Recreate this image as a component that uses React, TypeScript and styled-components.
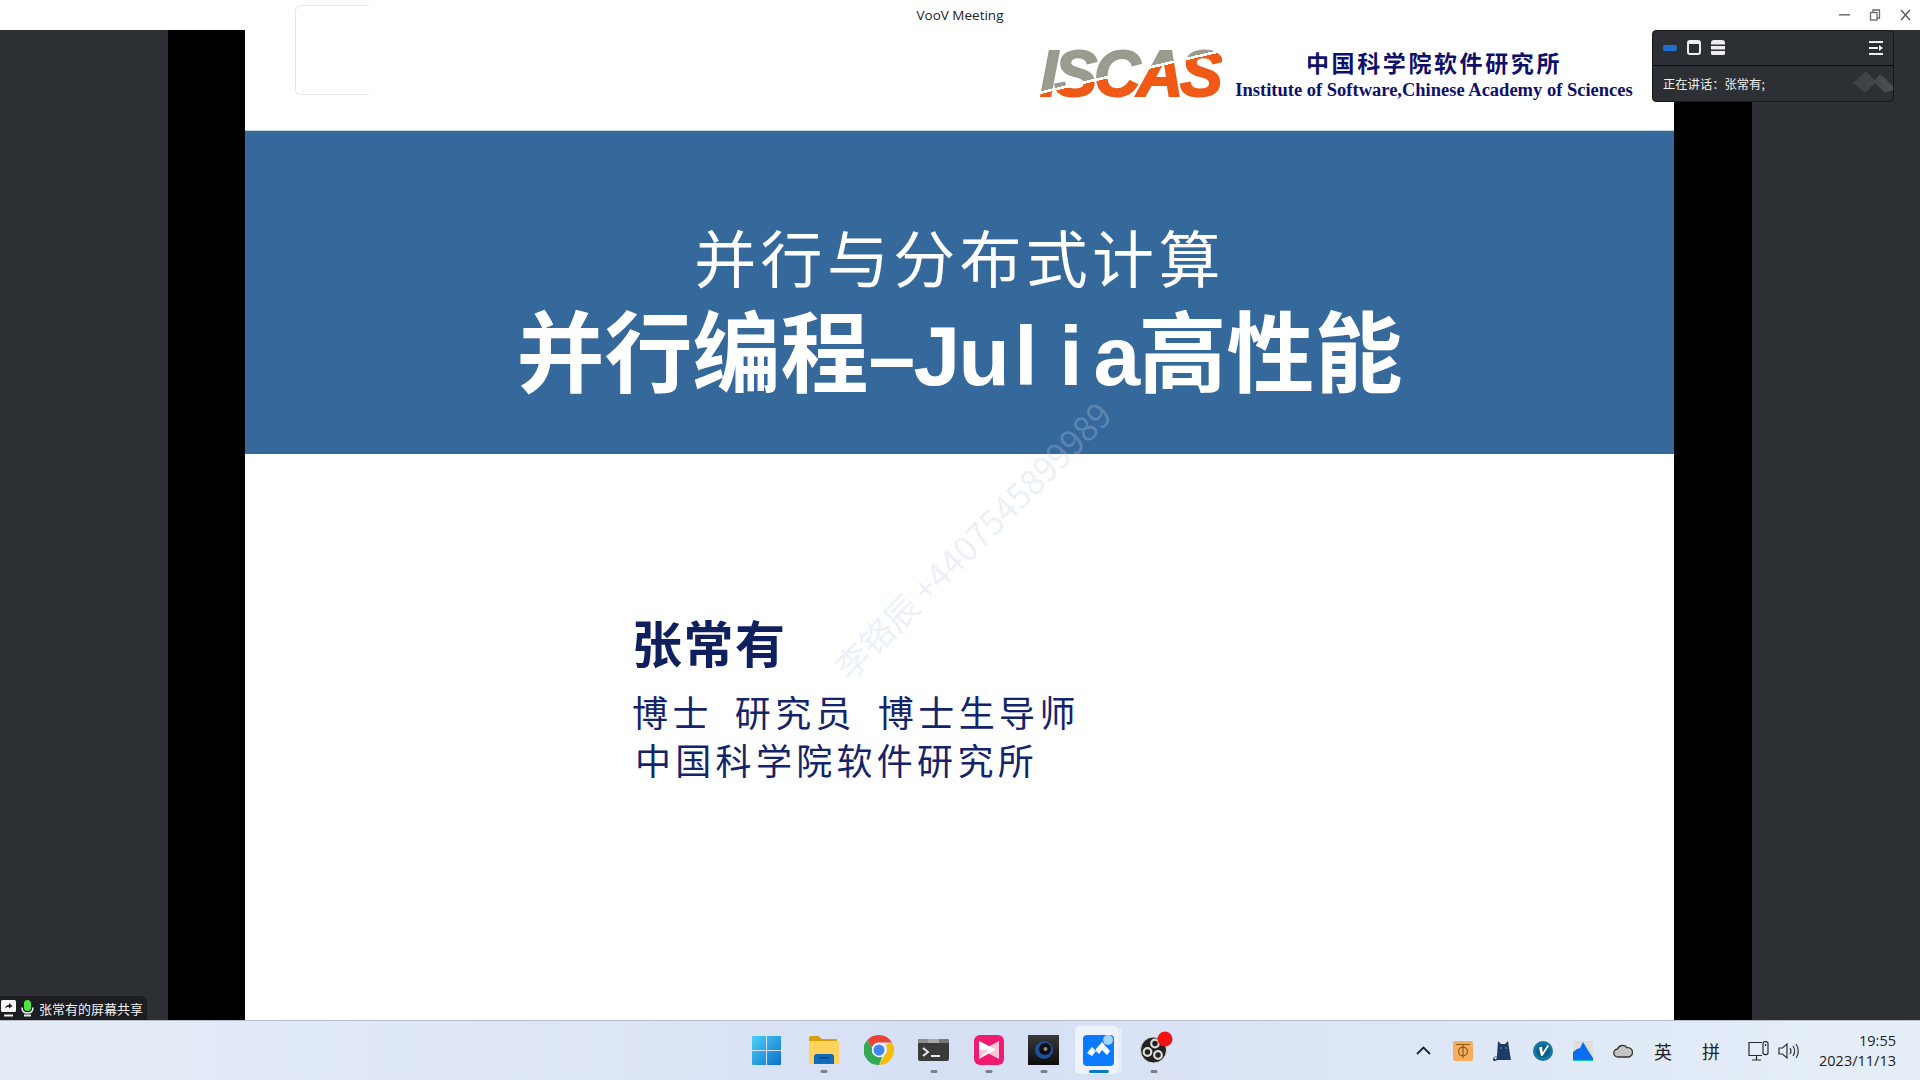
import React from "react";
import styled, { createGlobalStyle } from "styled-components";

const Global = createGlobalStyle`
  html, body { margin: 0; padding: 0; background: #fff; overflow: hidden; }
  #root { width: 1920px; height: 1080px; }
`;

const CJK = `"Noto Sans CJK SC", "Noto Sans", sans-serif`;
const SEGOE = `"Open Sans", "Noto Sans CJK SC", sans-serif`;
const SERIF = `"Liberation Serif", "Noto Sans CJK SC", serif`;

const Screen = styled.div`
  width: 1920px; height: 1080px; display: flex; flex-direction: column; position: relative; overflow: hidden;
  font-family: ${CJK}; background: #fff;
`;
const TitleBar = styled.div`
  height: 30px; flex: none; display: flex; align-items: center; justify-content: center; position: relative; z-index: 2;
`;
const TitleText = styled.span`
  font: 400 13.5px ${SEGOE}; color: #222;
`;
const WindowButtons = styled.div`
  position: absolute; right: 8px; top: 9px; display: flex; gap: 18px; align-items: center;
`;
const Stage = styled.div`
  flex: 1; display: flex; min-height: 0; position: relative;
`;
const Side = styled.div`
  width: 168px; flex: none; background: #2c2f33;
`;
const Pillar = styled.div<{ $w: number }>`
  width: ${(p) => p.$w}px; flex: none; background: #000;
`;
const Slide = styled.div`
  width: 1429px; flex: none; background: #fff; display: flex; flex-direction: column; margin-top: -30px; position: relative; z-index: 1;
`;
const SlideHeader = styled.div`
  height: 130px; flex: none; display: flex; align-items: flex-start; padding: 5px 41px 0 50px; box-sizing: border-box; justify-content: space-between;
`;
const Placeholder = styled.div`
  width: 73px; height: 88px; border: 1px solid #e6e6e6; border-right: none; border-radius: 6px 0 0 6px;
`;
const LogoBlock = styled.div`
  display: flex; align-items: flex-start; gap: 13px; margin-top: 44px;
`;
const LogoMark = styled.div`
  font: italic 700 64px/50px "Liberation Sans", sans-serif; letter-spacing: -3.2px; width: 182px; height: 50px; white-space: nowrap;
  background: linear-gradient(167deg, #9b9b8f 0 46%, #fff 46% 49%, #f15a16 49% 100%);
  -webkit-background-clip: text; background-clip: text; color: transparent;
  -webkit-text-stroke: 2px rgba(0, 0, 0, 0.01);
`;
const Institute = styled.div`
  display: flex; flex-direction: column; align-items: center; width: 398px; color: #10106a;
`;
const InstituteCn = styled.div`
  font: 700 23px/32px ${CJK}; letter-spacing: 2.6px; margin-top: -3px;
`;
const InstituteEn = styled.div`
  font: 700 18.5px/24px ${SERIF}; white-space: nowrap;
`;
const Band = styled.div`
  height: 324px; flex: none; background: #35689b; color: #fff; display: flex; flex-direction: column; align-items: center;
  border-top: 1px solid #c4d4e2; box-sizing: border-box;
`;
const TitleOne = styled.div`
  font: 400 62px/80px ${CJK}; letter-spacing: 4.3px; margin-top: 85px; white-space: nowrap;
`;
const TitleTwo = styled.div`
  font: 700 88px/100px ${CJK}; margin-top: 1px; white-space: nowrap; display: flex; align-items: baseline;
`;
const Latin = styled.span`
  display: inline-flex; flex: none;
`;
const LatinCell = styled.span`
  flex: none; width: 45px; text-align: center; font: 700 84px/100px "Liberation Sans", sans-serif;
`;
const SlideBody = styled.div`
  flex: 1; display: flex; flex-direction: column; padding: 155px 0 0 387px; color: #14246a;
`;
const Name = styled.div`
  font: 700 50px/64px ${CJK}; letter-spacing: 1.5px; color: #10205f;
`;
const Role = styled.div`
  font: 400 36px/48px ${CJK}; letter-spacing: 4.4px; word-spacing: -1.5px; white-space: pre; margin-top: 14px;
`;
const Org = styled(Role)`
  margin-top: 0; padding-left: 3px; letter-spacing: 4.3px;
`;
const Watermark = styled.div`
  position: absolute; left: 595px; top: 650px; transform: rotate(-45deg); transform-origin: left center;
  font: 400 34px/44px ${CJK}; color: rgba(190, 205, 230, 0.3); white-space: nowrap; z-index: 3; pointer-events: none;
`;
const SharePanel = styled.div`
  position: absolute; right: 26px; top: 0; width: 242px; height: 72px; background: #2c2f33; border: 1px solid #17181a; border-radius: 4px;
  box-sizing: border-box; display: flex; flex-direction: column; z-index: 4; overflow: hidden;
`;
const PanelTools = styled.div`
  height: 35px; flex: none; border-bottom: 1px solid #0b0b0c; display: flex; align-items: center; padding: 0 10px 1px 10px; gap: 10px; box-sizing: border-box;
`;
const PanelRow = styled.div`
  flex: 1; display: flex; align-items: center; padding-left: 10px; position: relative;
  font: 400 12.3px ${CJK}; color: #f0f0f0; white-space: pre;
`;
const PanelMark = styled.svg`
  position: absolute; right: 0; top: 5px;
`;
const Spacer = styled.div` flex: 1; `;
const SpeakerTag = styled.div`
  position: absolute; left: 0; bottom: 0; height: 24px; width: 147px; background: #1b1d20; border-radius: 0 6px 0 0;
  display: flex; align-items: center; padding-left: 1px; gap: 5px; box-sizing: border-box; z-index: 4;
`;
const TagText = styled.span`
  font: 400 13px ${CJK}; color: #f2f2f2; white-space: nowrap;
`;
const Taskbar = styled.div`
  height: 60px; flex: none; box-sizing: border-box; border-top: 1px solid #b8bcc8; position: relative; display: flex; align-items: center; justify-content: center;
  background: linear-gradient(90deg, #e4edf7 0%, #dfe7f6 25%, #d6e0f5 50%, #dde7f6 75%, #e6eff8 100%);
`;
const Apps = styled.div`
  display: flex; align-items: center; margin-top: -1px;
`;
const AppSlot = styled.div<{ $active?: boolean; $first?: boolean }>`
  width: 55px; height: 48px; margin-right: ${(p) => (p.$first ? 2.5 : 0)}px; flex: none;
  display: flex; align-items: center; justify-content: center; position: relative;
  &::before {
    content: "";
    display: ${(p) => (p.$active ? "block" : "none")};
    position: absolute; left: 3.500px; top: 0; bottom: 0; width: 43px; border-radius: 5px;
    background: #eef2fb; box-shadow: 5px 0 0 -1px #e6ebf8;
  }
  & > svg { position: relative; }
`;
const Dot = styled.span<{ $active?: boolean }>`
  position: absolute; bottom: 1px; left: 50%; transform: translateX(-50%); height: 3.5px; border-radius: 2px;
  width: ${(p) => (p.$active ? 20 : 7)}px; background: ${(p) => (p.$active ? "#0b78d0" : "#7a7f88")};
`;
const Tray = styled.div`
  position: absolute; right: 0; top: 0; bottom: 0; display: flex; align-items: center; padding-right: 24px;
`;
const TrayItem = styled.div<{ $w: number }>`
  width: ${(p) => p.$w}px; flex: none; display: flex; align-items: center; justify-content: center;
`;
const Ime = styled.span`
  font: 400 18px ${CJK}; color: #222; line-height: 1;
`;
const Clock = styled.div`
  font: 400 14.5px/20px ${SEGOE}; color: #1c1c1c; text-align: right; margin-left: 20px; width: 77px; flex: none; white-space: nowrap;
`;

const WinLogo = () => (
  <svg width="29" height="29" viewBox="0 0 29 29">
    <defs>
      <linearGradient id="w" x1="0" y1="0" x2="1" y2="1"><stop offset="0" stopColor="#4ed2fb" /><stop offset="1" stopColor="#0a6fc8" /></linearGradient>
    </defs>
    <path fill="url(#w)" d="M1 0h13v14H0V1a1 1 0 0 1 1-1zM15 0h13a1 1 0 0 1 1 1v13H15zM0 15h14v14H1a1 1 0 0 1-1-1zM15 15h14v13a1 1 0 0 1-1 1H15z" />
  </svg>
);
const Folder = () => (
  <svg width="30" height="28" viewBox="0 0 30 28">
    <path fill="#d99e0c" d="M0 2a2 2 0 0 1 2-2h7l4 3h15v6H0z" />
    <path fill="#fdd35c" d="M0 5h28a2 2 0 0 1 2 2v21H0z" />
    <path fill="#0f6cbd" d="M5 28v-7a3 3 0 0 1 3-3h14a3 3 0 0 1 3 3v7z" />
    <rect x="10" y="21" width="10" height="1.5" fill="#0a3f78" />
  </svg>
);
const Chrome = () => (
  <svg width="30" height="30" viewBox="0 0 48 48">
    <path fill="#ea4335" d="M24 0a24 24 0 0 1 20.800 12H24a12 12 0 0 0-11.400 8.200L5.400 8A24 24 0 0 1 24 0z" />
    <path fill="#fbbc05" d="M44.800 12A24 24 0 0 1 24 48l10.400-18A12 12 0 0 0 35 16z" />
    <path fill="#34a853" d="M24 48A24 24 0 0 1 5.400 8l10.400 18A12 12 0 0 0 29 35z" />
    <circle cx="24" cy="24" r="11.500" fill="#fff" />
    <circle cx="24" cy="24" r="9" fill="#4285f4" />
  </svg>
);
const Terminal = () => (
  <svg width="31" height="22" viewBox="0 0 31 22">
    <rect width="31" height="22" rx="2" fill="#3a3a3a" />
    <path fill="#8e8e8e" d="M2 0h8v4H0V2a2 2 0 0 1 2-2z" />
    <rect x="10" width="11" height="4" fill="#a8a8a8" />
    <path fill="#777" d="M21 0h8a2 2 0 0 1 2 2v2H21z" />
    <path d="M5 9l5 4-5 4" fill="none" stroke="#e8e8e8" strokeWidth="2" />
    <rect x="13" y="16" width="9" height="2" fill="#e8e8e8" />
  </svg>
);
const PinkApp = () => (
  <svg width="30" height="30" viewBox="0 0 30 30">
    <rect width="30" height="30" rx="6" fill="#f01a70" />
    <path fill="#f9c5d8" d="M25 6L8 15l17 9z" />
    <path fill="#fff" d="M5 6l17 8.500L5 24z" />
    <path fill="#f9c5d8" d="M5 15h9l-9 9z" />
  </svg>
);
const Camera = () => (
  <svg width="31" height="30" viewBox="0 0 31 30">
    <defs>
      <linearGradient id="c" x1="0" y1="0" x2="0" y2="1"><stop offset="0" stopColor="#3a3a3a" /><stop offset="1" stopColor="#0c0c0c" /></linearGradient>
    </defs>
    <rect width="31" height="30" fill="url(#c)" />
    <circle cx="16" cy="15" r="9" fill="#1d4f9c" />
    <circle cx="17" cy="14" r="6" fill="#0d0d12" />
    <circle cx="17.500" cy="14" r="2" fill="#8a8a8a" />
  </svg>
);
const Voov = () => (
  <svg width="31" height="31" viewBox="0 0 31 31">
    <rect width="31" height="31" rx="4" fill="#0a7bff" />
    <path fill="#fff" d="M4 18l5-6 4 4-4 5zM13 14l6-7 8 9-3 4-5-5-3 4-3-3z" />
    <path fill="#cfe4ff" d="M9 12l4 4-2 2z" />
    <circle cx="25" cy="5" r="5" fill="#a9d4ff" />
  </svg>
);
const Obs = () => (
  <svg width="38" height="38" viewBox="0 0 38 38">
    <circle cx="18.500" cy="19" r="13" fill="#222" stroke="#d8d8d8" strokeWidth="1" />
    <g fill="none" stroke="#dcdcdc" strokeWidth="2.200">
      <circle cx="20" cy="12.500" r="3.800" />
      <circle cx="12.500" cy="21" r="3.800" />
      <circle cx="23" cy="24" r="3.800" />
    </g>
    <circle cx="30" cy="8" r="7.500" fill="#f01414" />
  </svg>
);
const Minimize = () => (
  <svg width="13" height="12" viewBox="0 0 13 12"><rect x="1" y="5" width="11" height="1.600" fill="#777" /></svg>
);
const Restore = () => (
  <svg width="12" height="12" viewBox="0 0 12 12" fill="none" stroke="#666" strokeWidth="1.300">
    <rect x="1.500" y="3.500" width="6.500" height="7.500" /><path d="M4 3.500V1h6.500v8H8" />
  </svg>
);
const Close = () => (
  <svg width="13" height="12" viewBox="0 0 13 12" stroke="#555" strokeWidth="1.300"><path d="M2 1l9 10M11 1L2 11" /></svg>
);
const ShareScreen = () => (
  <svg width="15" height="17" viewBox="0 0 15 17">
    <rect width="15" height="12" rx="1.500" fill="#f5f5f5" />
    <rect x="3" y="14.500" width="9" height="2" fill="#f5f5f5" />
    <path d="M4 8.500c.6-2.400 2-3.400 4-3.400V3l3.500 3L8 8.600V7c-1.700 0-3 .3-4 1.500z" fill="#222" />
  </svg>
);
const Mic = () => (
  <svg width="13" height="17" viewBox="0 0 13 17">
    <rect x="3" y="0" width="7" height="11" rx="3.500" fill="#4fe33f" />
    <path d="M1 7.500c0 3.500 2.400 5.500 5.500 5.500S12 11 12 7.500" fill="none" stroke="#eee" strokeWidth="1.600" />
    <rect x="3" y="14.500" width="7" height="2" fill="#eee" />
  </svg>
);
const ChevronUp = () => (
  <svg width="15" height="9" viewBox="0 0 15 9" fill="none" stroke="#222" strokeWidth="1.800"><path d="M1 8l6.500-6.500L14 8" /></svg>
);
const OrangeTray = () => (
  <svg width="20" height="20" viewBox="0 0 20 20">
    <rect width="20" height="20" rx="2" fill="#f7ad5c" />
    <path d="M3 3.500h14M10 3.500V17" stroke="#8a5a22" strokeWidth="1.200" />
    <circle cx="10" cy="10.500" r="4.400" fill="none" stroke="#8a5a22" strokeWidth="1.200" />
  </svg>
);
const Cat = () => (
  <svg width="20" height="20" viewBox="0 0 20 20">
    <path fill="#1f3a66" d="M5 0l3 3h4l3-3 1 7 2 12H3l1-4-3 1 1 2 2 2H1c-2-1-1-4 2-4l1-1z" />
    <circle cx="8" cy="7" r=".7" fill="#9cc" /><circle cx="13" cy="7" r=".7" fill="#9cc" />
  </svg>
);
const VBadge = () => (
  <svg width="20" height="20" viewBox="0 0 20 20">
    <circle cx="10" cy="10" r="10" fill="#1377a3" />
    <circle cx="10" cy="10" r="6.800" fill="#0d5f86" />
    <path fill="#fff" d="M6 6.500l3-1 .6 6L14.500 4l1.500 1-6.500 10H8z" />
  </svg>
);
const Peak = () => (
  <svg width="20" height="20" viewBox="0 0 20 20">
    <rect width="20" height="20" fill="#dedede" />
    <path fill="#0a6cf0" d="M0 11l4-3 3-1 3-6 3 5 3 5 4 6v2H0z" />
    <rect y="19" width="20" height="1" fill="#18c8a8" />
  </svg>
);
const Cloud = () => (
  <svg width="20" height="14" viewBox="0 0 20 14">
    <path d="M5 13a4 4 0 0 1-.5-8A5.500 5.500 0 0 1 14 3.600 4.600 4.600 0 0 1 15.500 13z" fill="#c4c4c4" stroke="#333" strokeWidth="1.300" />
  </svg>
);
const Network = () => (
  <svg width="21" height="20" viewBox="0 0 21 20" fill="none" stroke="#2a2a2a" strokeWidth="1.200">
    <path d="M14 1.500H1v13h13" /><path d="M4 19h9M8.500 14.500V19" />
    <rect x="15" y="0.600" width="5" height="13" rx="2" />
    <path d="M17.500 3v2" />
  </svg>
);
const Speaker = () => (
  <svg width="21" height="18" viewBox="0 0 21 18" fill="none" stroke="#333" strokeWidth="1.200">
    <path d="M1 6h3.500L9 2v14l-4.500-4H1z" />
    <path d="M12 6c1.200 1.800 1.200 4.200 0 6M15 4c2 3 2 7 0 10M18 2c3 4 3 10 0 14" />
  </svg>
);

const apps = [
  { key: "win", icon: <WinLogo />, first: true },
  { key: "folder", icon: <Folder />, dot: true },
  { key: "chrome", icon: <Chrome /> },
  { key: "term", icon: <Terminal />, dot: true },
  { key: "pink", icon: <PinkApp />, dot: true },
  { key: "cam", icon: <Camera />, dot: true },
  { key: "voov", icon: <Voov />, dot: true, active: true },
  { key: "obs", icon: <Obs />, dot: true },
];

const latinChars = ["–", "J", "u", "l", "i", "a"];

export default function App() {
  return (
    <Screen>
      <Global />
      <TitleBar>
        <TitleText>VooV Meeting</TitleText>
        <WindowButtons><Minimize /><Restore /><Close /></WindowButtons>
      </TitleBar>
      <Stage>
        <Side />
        <Pillar $w={77} />
        <Slide>
          <SlideHeader>
            <Placeholder />
            <LogoBlock>
              <LogoMark>ISCAS</LogoMark>
              <Institute>
                <InstituteCn>中国科学院软件研究所</InstituteCn>
                <InstituteEn>Institute of Software,Chinese Academy of Sciences</InstituteEn>
              </Institute>
            </LogoBlock>
          </SlideHeader>
          <Band>
            <TitleOne>并行与分布式计算</TitleOne>
            <TitleTwo>
              并行编程
              <Latin>{latinChars.map((c) => <LatinCell key={c}>{c}</LatinCell>)}</Latin>
              高性能
            </TitleTwo>
          </Band>
          <SlideBody>
            <Name>张常有</Name>
            <Role>{"博士  研究员  博士生导师"}</Role>
            <Org>中国科学院软件研究所</Org>
          </SlideBody>
          <Watermark>李铬辰 +4407545899989</Watermark>
        </Slide>
        <Pillar $w={78} />
        <Side />
        <SharePanel>
          <PanelTools>
            <svg width="14" height="6" viewBox="0 0 14 6"><rect width="14" height="6" rx="2" fill="#1a6fd0" /></svg>
            <svg width="14" height="15" viewBox="0 0 14 15"><rect x="1" y="1" width="12" height="13" rx="2" fill="none" stroke="#eee" strokeWidth="2" /><rect x="1" y="1" width="12" height="3" fill="#eee" /></svg>
            <svg width="14" height="15" viewBox="0 0 14 15" fill="#eee"><path d="M3 0h8a3 3 0 0 1 3 3v1.500H0V3a3 3 0 0 1 3-3z" /><rect y="6" width="14" height="3.500" /><path d="M0 11h14v2.500a1.500 1.500 0 0 1-1.500 1.500h-11A1.500 1.500 0 0 1 0 13.500z" /></svg>
            <Spacer />
            <svg width="14" height="14" viewBox="0 0 14 14" fill="#eee"><rect width="14" height="2" /><rect y="6" width="9" height="2" /><rect y="12" width="14" height="2" /><path d="M10 4l4 3-4 3z" /></svg>
          </PanelTools>
          <PanelRow>
            {"正在讲话：张常有;"}
            <PanelMark width="40" height="26" viewBox="0 0 40 26">
              <defs>
                <linearGradient id="pm" x1="0" y1="0" x2="1" y2="0"><stop offset="0" stopColor="#3b3e42" /><stop offset="1" stopColor="#4c4f53" /></linearGradient>
              </defs>
              <path fill="url(#pm)" d="M13 0l10 11-11 11L0 12zM27 3l13 12v4l-8 3-11-11z" />
            </PanelMark>
          </PanelRow>
        </SharePanel>
        <SpeakerTag>
          <ShareScreen />
          <Mic />
          <TagText>张常有的屏幕共享</TagText>
        </SpeakerTag>
      </Stage>
      <Taskbar>
        <Apps>
          {apps.map((a) => (
            <AppSlot key={a.key} $active={a.active} $first={a.first}>
              {a.icon}
              {a.dot && <Dot $active={a.active} />}
            </AppSlot>
          ))}
        </Apps>
        <Tray>
          <TrayItem $w={40}><ChevronUp /></TrayItem>
          <TrayItem $w={40}><OrangeTray /></TrayItem>
          <TrayItem $w={40}><Cat /></TrayItem>
          <TrayItem $w={40}><VBadge /></TrayItem>
          <TrayItem $w={40}><Peak /></TrayItem>
          <TrayItem $w={40}><Cloud /></TrayItem>
          <TrayItem $w={40}><Ime>英</Ime></TrayItem>
          <TrayItem $w={56}><Ime>拼</Ime></TrayItem>
          <TrayItem $w={38}><Network /></TrayItem>
          <TrayItem $w={22}><Speaker /></TrayItem>
          <Clock>19:55<br />2023/11/13</Clock>
        </Tray>
      </Taskbar>
    </Screen>
  );
}
